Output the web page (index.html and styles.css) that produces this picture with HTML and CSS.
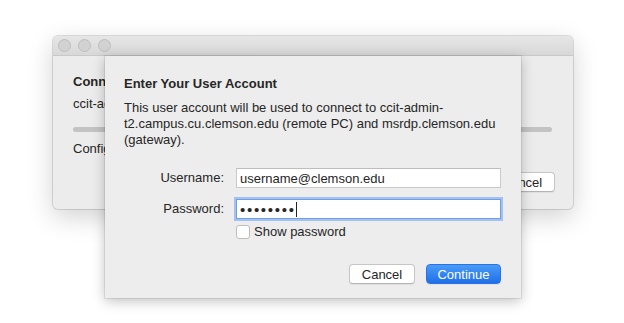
FILE: index.html
```html
<!DOCTYPE html>
<html lang="en">
<head>
  <title>Enter Your User Account</title>
  <meta charset="UTF-8">
  <meta name="viewport" content="width=device-width, initial-scale=1.0">
  <link rel="stylesheet" href="styles.css">
</head>
<body>
<div class="stage">
  <div class="window">
    <div class="titlebar">
      <span class="light"></span>
      <span class="light"></span>
      <span class="light"></span>
    </div>
    <div class="window-body">
      <div class="conn-title">Connecting to “ccit-admin-t2”</div>
      <div class="conn-host">ccit-admin-t2.campus.cu.clemson.edu</div>
      <div class="progress"></div>
      <div class="conn-status">Configuring remote PC...</div>
      <div class="window-actions">
        <button class="btn">Cancel</button>
      </div>
    </div>

    <div class="sheet">
      <h2 class="sheet-title">Enter Your User Account</h2>
      <p class="sheet-desc">This user account will be used to connect to ccit-admin-t2.campus.cu.clemson.edu (remote PC) and msrdp.clemson.edu (gateway).</p>
      <div class="form">
        <label class="label">Username:</label>
        <div class="field">username@clemson.edu</div>
        <label class="label">Password:</label>
        <div class="field focused"><span class="dots">••••••••</span><span class="caret"></span></div>
        <div></div>
        <div class="check-row">
          <span class="checkbox"></span>
          <span>Show password</span>
        </div>
      </div>
      <div class="sheet-actions">
        <button class="btn">Cancel</button>
        <button class="btn primary">Continue</button>
      </div>
    </div>
  </div>
</div>
</body>
</html>
```
FILE: styles.css
```css
html, body {
  height: 100%;
}
body {
  margin: 0;
  background: #fff;
  font-family: 'Liberation Sans', Arial, sans-serif;
  font-size: 13px;
  line-height: 16px;
  color: #262626;
}
.stage {
  height: 323px;
  box-sizing: border-box;
  padding: 36px 0 0 53px;
}
.window {
  position: relative;
  width: 520px;
  height: 173px;
  background: #ececec;
  border-radius: 5px;
  box-shadow: 0 0 0 1px rgba(0,0,0,0.12), 0 8px 26px rgba(0,0,0,0.18);
}
.titlebar {
  height: 19px;
  display: flex;
  align-items: center;
  gap: 7px;
  padding-left: 5px;
  background: linear-gradient(#e6e6e6, #d8d8d8);
  border-bottom: 1px solid #c9c9c9;
  border-radius: 5px 5px 0 0;
}
.light {
  width: 11px;
  height: 11px;
  border-radius: 50%;
  background: #d2d2d2;
  border: 1px solid #bebebe;
}
.window-body {
  padding: 18px 21px 0 20px;
}
.conn-title {
  font-weight: bold;
}
.conn-host {
  margin-top: 6px;
}
.progress {
  margin-top: 15px;
  height: 5px;
  border-radius: 3px;
  background: #c3c3c3;
}
.conn-status {
  margin-top: 9px;
}
.window-actions {
  display: flex;
  justify-content: flex-end;
  margin-top: 15px;
  margin-right: -3px;
}
.btn {
  font-family: inherit;
  font-size: 13px;
  height: 20px;
  width: 66px;
  padding: 0;
  box-sizing: border-box;
  background: #fff;
  color: #262626;
  border: 1px solid #c6c6c6;
  border-bottom-color: #b4b4b4;
  border-radius: 4px;
  box-shadow: 0 1px 1px rgba(0,0,0,0.06);
}
.btn.primary {
  width: 75px;
  color: #fff;
  border-color: #2a73e6;
  background: linear-gradient(#4a9bf8, #1f6fe9);
}
.sheet {
  position: absolute;
  left: 52px;
  top: 20px;
  width: 416px;
  box-sizing: border-box;
  padding: 20px 20px 14px 19px;
  background: #ededed;
  box-shadow: 0 0 0 1px rgba(0,0,0,0.08), 0 3px 12px rgba(0,0,0,0.25);
}
.sheet-title {
  margin: 0;
  font-size: 13px;
  line-height: 16px;
  font-weight: bold;
}
.sheet-desc {
  margin: 8px 0 0;
}
.form {
  margin-top: 20px;
  display: grid;
  grid-template-columns: 100px 1fr;
  column-gap: 12px;
  row-gap: 11px;
  align-items: center;
}
.label {
  text-align: right;
}
.field {
  height: 20px;
  box-sizing: border-box;
  padding: 1px 3px 0;
  background: #fff;
  border: 1px solid #cacaca;
  border-top-color: #bdbdbd;
  display: flex;
  align-items: center;
}
.field.focused {
  border-color: #6f9eea;
  box-shadow: 0 0 0 2px #a3c2f0;
}
.dots {
  font-size: 15px;
  letter-spacing: 1.7px;
  line-height: 16px;
}
.caret {
  width: 1px;
  height: 15px;
  background: #222;
}
.check-row {
  display: flex;
  align-items: center;
  gap: 4px;
  margin-top: -6px;
}
.checkbox {
  width: 12px;
  height: 12px;
  background: #fff;
  border: 1px solid #bdbdbd;
  border-radius: 3px;
}
.sheet-actions {
  display: flex;
  justify-content: flex-end;
  gap: 11px;
  margin-top: 24px;
}
```
